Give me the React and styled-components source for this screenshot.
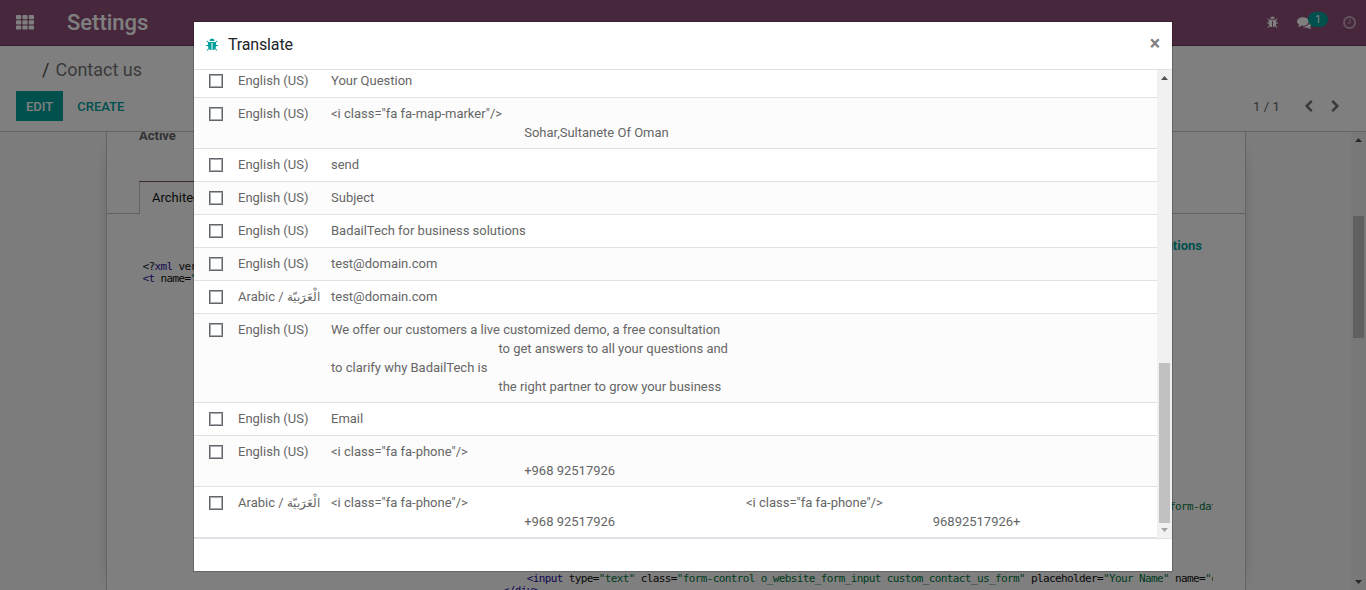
import React from "react";
import styled, { createGlobalStyle } from "styled-components";

const teal = "#00A09D";

const GlobalStyle = createGlobalStyle`
  *, *::before, *::after { box-sizing: border-box; }
  html, body { margin: 0; height: 100%; overflow: hidden; }
  body { font-family: Roboto, "Liberation Sans", sans-serif; font-size: 13px; line-height: 19px; color: #666; }
`;

const Client = styled.div`
  display: flex;
  flex-direction: column;
  height: 590px;
  width: 1366px;
  overflow: hidden;
`;

/* ---------- icons ---------- */
const Svg = styled.svg`
  display: block;
  width: ${(p) => p.$size}px;
  height: ${(p) => p.$size}px;
  fill: currentColor;
  flex: none;
`;
const icons = {
  bug: "M1696 960q0 26-19 45t-45 19h-224q0 171-67 290l208 209q19 19 19 45t-19 45q-18 19-45 19t-45-19l-198-197q-5 5-15 13t-42 28.5-65 36.5-82 29-97 13v-896h-128v896q-51 0-101.5-13.5t-87-33-66-39-43.5-32.5l-15-14-183 207q-20 21-48 21-24 0-43-16-19-18-20.5-44.5t15.5-46.5l202-227q-58-114-58-274h-224q-26 0-45-19t-19-45 19-45 45-19h224v-294l-173-173q-19-19-19-45t19-45 45-19 45 19l173 173h844l173-173q19-19 45-19t45 19 19 45-19 45l-173 173v294h224q26 0 45 19t19 45zm-480-576h-640q0-133 93.5-226.5t226.5-93.5 226.5 93.5 93.5 226.5z",
  comments:
    "M1408 768q0 139-94 257t-256.5 186.5-353.5 68.5q-86 0-176-16-124 88-278 128-36 9-86 16h-3q-11 0-20.5-8t-11.5-21q-1-3-1-6.5t.5-6.5 2-6l2.5-5 3.5-5.5 4-5 4.5-5 4-4.5q5-6 23-25t26-29.5 22.5-29 25-38.5 20.5-44q-124-72-195-177t-71-224q0-139 94-257t256.5-186.5 353.5-68.5 353.5 68.5 256.5 186.5 94 257zm384 256q0 120-71 224.5t-195 176.5q10 24 20.5 44t25 38.5 22.5 29 26 29.5 23 25q1 1 4 4.5t4.5 5 4 5 3.5 5.5l2.5 5 2 6 .5 6.5-1 6.5q-3 14-13 22t-22 7q-50-7-86-16-154-40-278-128-90 16-176 16-271 0-472-132 58 4 88 4 161 0 309-45t264-129q125-92 192-212t67-254q0-77-23-152 129 71 204 178t75 230z",
  clock:
    "M1024 544v448q0 14-9 23t-23 9h-320q-14 0-23-9t-9-23v-64q0-14 9-23t23-9h224v-352q0-14 9-23t23-9h64q14 0 23 9t9 23zm416 352q0-148-73-273t-198-198-273-73-273 73-198 198-73 273 73 273 198 198 273 73 273-73 198-198 73-273zm224 0q0 209-103 385.5t-279.5 279.5-385.5 103-385.5-103-279.5-279.5-103-385.5 103-385.5 279.5-279.5 385.5-103 385.5 103 279.5 279.5 103 385.5z",
  left: "M1427 301l-531 531 531 531q19 19 19 45t-19 45l-166 166q-19 19-45 19t-45-19l-742-742q-19-19-19-45t19-45l742-742q19-19 45-19t45 19l166 166q19 19 19 45t-19 45z",
  right:
    "M1363 877l-742 742q-19 19-45 19t-45-19l-166-166q-19-19-19-45t19-45l531-531-531-531q-19-19-19-45t19-45l166-166q19-19 45-19t45 19l742 742q19 19 19 45t-19 45z",
};
const Icon = ({ name, size = 14 }) => (
  <Svg $size={size} viewBox="0 0 1792 1792">
    <path d={icons[name]} />
  </Svg>
);

/* ---------- navbar ---------- */
const Navbar = styled.header`
  display: flex;
  align-items: center;
  height: 46px;
  flex: none;
  padding: 0 9px 1px 16px;
  background: #8f4f78;
  border-bottom: 1px solid #68395a;
  color: #fff;
`;
const AppsGrid = styled.svg`
  width: 18px;
  height: 15px;
  fill: #fff;
`;
const AppName = styled.div`
  margin-left: 33px;
  padding-top: 1px;
  font-size: 22px;
  line-height: 26px;
  font-weight: 500;
`;
const Systray = styled.div`
  display: flex;
  align-items: center;
  margin-left: auto;
`;
const Messages = styled.div`
  display: flex;
  align-items: center;
  margin: 0 14px 0 18px;
`;
const Badge = styled.span`
  width: 20px;
  height: 15px;
  margin: -6px 0 0 -4px;
  border-radius: 8px;
  background: ${teal};
  font-size: 11px;
  line-height: 15px;
  text-align: center;
`;
const Faded = styled.span`
  opacity: 0.5;
`;

/* ---------- control panel ---------- */
const ControlPanel = styled.section`
  height: 86px;
  flex: none;
  padding: 12px 24px 0 16px;
  background: #fff;
  border-bottom: 1px solid #cbcbcb;
`;
const Breadcrumb = styled.div`
  padding-left: 26px;
  font-size: 18px;
  line-height: 24px;
  color: #777;
`;
const Slash = styled.span`
  color: #4c4c4c;
  margin-right: 6px;
`;
const Actions = styled.div`
  display: flex;
  align-items: center;
  margin-top: 9px;
`;
const Button = styled.button`
  height: 30px;
  padding: 1px ${(p) => (p.$primary ? 10 : 14)}px 0;
  border: 0;
  font: 500 13px/29px Roboto, sans-serif;
  color: ${(p) => (p.$primary ? "#fff" : teal)};
  background: ${(p) => (p.$primary ? teal : "transparent")};
`;
const Pager = styled.div`
  display: flex;
  align-items: center;
  margin-left: auto;
  color: #666;
  letter-spacing: 0.1px;
`;
const PagerButtons = styled.div`
  display: flex;
  gap: 14px;
  margin-left: 22px;
  color: #777;
`;

/* ---------- form ---------- */
const Content = styled.main`
  display: flex;
  flex: 1;
  min-height: 0;
  background: #f9f9f9;
`;
const SheetWrap = styled.div`
  display: flex;
  width: 1351px;
  overflow: hidden;
`;
const Sheet = styled.div`
  width: 1140px;
  margin-left: 106px;
  margin-right: 105px;
  background: #fff;
  border: solid #c8c8d3;
  border-width: 0 1px;
  box-shadow: 0 5px 20px -15px #000;
  overflow: hidden;
`;
const FieldLabel = styled.div`
  margin: -6px 0 0 32px;
  font-weight: 700;
  color: #666;
`;
const Tabs = styled.div`
  display: flex;
  margin-top: 36px;
`;
const TabLine = styled.div`
  width: ${(p) => p.$width || "auto"};
  flex: ${(p) => (p.$width ? "none" : 1)};
  border-bottom: 1px solid #c4c4c4;
`;
const Tab = styled.div`
  height: 33px;
  padding: 6px 12px;
  border: solid #c4c4c4;
  border-width: 1px 1px 0;
  border-top-color: #7c4a6c;
  color: #111;
`;
const TranslateLink = styled.div`
  margin: 22px 43px 0 0;
  text-align: right;
  font-weight: 700;
  color: ${teal};
`;
const Code = styled.pre`
  margin: 6px 32px 0 35.5px;
  overflow: hidden;
  font: 11px/12px "DejaVu Sans Mono", monospace;
  letter-spacing: -0.62px;
  color: #111;
`;
const Tag = styled.span`
  color: #2a0f9c;
`;
const Str = styled.span`
  color: #00783c;
`;

/* ---------- scroll bars ---------- */
const ScrollTrack = styled.div`
  display: flex;
  flex-direction: column;
  align-items: center;
  width: 15px;
  flex: none;
  background: #f1f1f1;
`;
const Arrow = styled.div`
  width: 7px;
  height: 4px;
  margin: ${(p) => (p.$down ? "auto 0 6px" : "6px 0 0")};
  background: ${(p) => p.$color || "#505050"};
  clip-path: ${(p) => (p.$down ? "polygon(0 0, 100% 0, 50% 100%)" : "polygon(50% 0, 100% 100%, 0 100%)")};
`;
const Thumb = styled.div`
  width: 11px;
  height: ${(p) => p.$height}px;
  margin-top: ${(p) => p.$offset}px;
  background: #c1c1c1;
`;

/* ---------- dialog ---------- */
const Backdrop = styled.div`
  position: fixed;
  inset: 0;
  z-index: 10;
  display: flex;
  justify-content: center;
  align-items: flex-start;
  padding-top: 21px;
  background: rgba(0, 0, 0, 0.5);
`;
const Dialog = styled.div`
  display: flex;
  flex-direction: column;
  width: 980px;
  height: 551px;
  background: #fff;
  background-clip: padding-box;
  border: 1px solid rgba(0, 0, 0, 0.2);
`;
const DialogHeader = styled.div`
  display: flex;
  align-items: center;
  height: 48px;
  flex: none;
  padding: 0 12px 1px 11px;
  border-bottom: 1px solid #dee2e6;
  color: ${teal};
`;
const DialogTitle = styled.h4`
  margin: 0 auto 0 9px;
  font-size: 16px;
  line-height: 24px;
  font-weight: 400;
  letter-spacing: -0.15px;
  color: #212529;
`;
const Close = styled.span`
  padding-bottom: 3px;
  font-size: 19.5px;
  line-height: 20px;
  font-weight: 700;
  color: #7f7f7f;
`;
const DialogBody = styled.div`
  display: flex;
  height: 468px;
  flex: none;
`;
const Rows = styled.div`
  display: flex;
  flex-direction: column;
  justify-content: flex-end;
  flex: 1;
  overflow: hidden;
`;
const Row = styled.div`
  display: grid;
  grid-template-columns: 29px 93px 415px 1fr;
  flex: none;
  min-height: 33px;
  padding: 6px 0 6px 15px;
  border-bottom: 1px solid #dee2e6;
  background: ${(p) => (p.$striped ? "#fcfcfc" : "#fff")};
  white-space: pre;
`;
const Checkbox = styled.span`
  width: 14px;
  height: 14px;
  margin-top: 3px;
  border: 1px solid #666;
  background: #fff;
  box-shadow: inset 0 0 0 1px #a3abb5;
`;
const Arabic = styled.span`
  font-size: 12.3px;
  line-height: 1;
`;
const Term = styled.span`
  letter-spacing: -0.005px;
`;
const DialogFooter = styled.div`
  flex: 1;
  border-top: 1px solid #dee2e6;
`;

const EN = "English (US)";
const AR = (
  <>
    Arabic / <Arabic>الْعَرَبيّة</Arabic>
  </>
);
const pad = (n) => " ".repeat(n);
const terms = [
  [EN, "Your Question"],
  [EN, `<i class="fa fa-map-marker"/>\n${pad(60)}Sohar,Sultanete Of Oman`],
  [EN, "send"],
  [EN, "Subject"],
  [EN, "BadailTech for business solutions"],
  [EN, "test@domain.com"],
  [AR, "test@domain.com"],
  [
    EN,
    `We offer our customers a live customized demo, a free consultation\n${pad(52)}to get answers to all your questions and\nto clarify why BadailTech is\n${pad(52)}the right partner to grow your business`,
  ],
  [EN, "Email"],
  [EN, `<i class="fa fa-phone"/>\n${pad(60)}+968 92517926`],
  [AR, `<i class="fa fa-phone"/>\n${pad(60)}+968 92517926`, `<i class="fa fa-phone"/>\n${pad(58)}96892517926+`],
];

export default function App() {
  return (
    <>
      <GlobalStyle />
      <Client>
        <Navbar>
          <AppsGrid viewBox="0 0 18 15">
            {[0, 1, 2].map((r) =>
              [0, 1, 2].map((c) => <rect key={`${r}${c}`} x={c * 6.4} y={r * 5.2} width="5.2" height="4.2" rx="0.9" />)
            )}
          </AppsGrid>
          <AppName>Settings</AppName>
          <Systray>
            <Icon name="bug" size={13} />
            <Messages>
              <Icon name="comments" size={15} />
              <Badge>1</Badge>
            </Messages>
            <Faded>
              <Icon name="clock" size={15} />
            </Faded>
          </Systray>
        </Navbar>
        <ControlPanel>
          <Breadcrumb>
            <Slash>/</Slash>Contact us
          </Breadcrumb>
          <Actions>
            <Button $primary>EDIT</Button>
            <Button>CREATE</Button>
            <Pager>
              1 / 1
              <PagerButtons>
                <Icon name="left" size={13} />
                <Icon name="right" size={13} />
              </PagerButtons>
            </Pager>
          </Actions>
        </ControlPanel>
        <Content>
          <SheetWrap>
            <Sheet>
              <FieldLabel>Active</FieldLabel>
              <Tabs>
                <TabLine $width="32px" />
                <Tab>Architecture</Tab>
                <TabLine />
              </Tabs>
              <TranslateLink>Edit Translations</TranslateLink>
              <Code>
                {"<?"}
                <Tag>xml</Tag>
                {" version="}
                <Str>"1.0"</Str>
                {"?>\n"}
                <Tag>{"<t"}</Tag>
                {" name="}
                <Str>"Contact us"</Str>
                {">" + "\n".repeat(19) + pad(171)}
                <Str>form-data"</Str>
                {"\n".repeat(6) + pad(64)}
                <Tag>{"<input"}</Tag>
                {" type="}
                <Str>"text"</Str>
                {" class="}
                <Str>"form-control o_website_form_input custom_contact_us_form"</Str>
                {" placeholder="}
                <Str>"Your Name"</Str>
                {" name="}
                <Str>"contact_name"</Str>
                {"\n" + pad(60)}
                <Tag>{"</div>"}</Tag>
              </Code>
            </Sheet>
          </SheetWrap>
          <ScrollTrack>
            <Arrow />
            <Thumb $height={122} $offset={74} />
            <Arrow $down />
          </ScrollTrack>
        </Content>
      </Client>
      <Backdrop>
        <Dialog>
          <DialogHeader>
            <Icon name="bug" size={14} />
            <DialogTitle>Translate</DialogTitle>
            <Close>×</Close>
          </DialogHeader>
          <DialogBody>
            <Rows>
              {terms.map(([lang, source, value], i) => (
                <Row key={i} $striped={i % 2 === 1}>
                  <Checkbox />
                  <span>{lang}</span>
                  <Term>{source}</Term>
                  <Term>{value}</Term>
                </Row>
              ))}
            </Rows>
            <ScrollTrack>
              <Arrow />
              <Thumb $height={160} $offset={283} />
              <Arrow $down $color="#a3a3a3" />
            </ScrollTrack>
          </DialogBody>
          <DialogFooter />
        </Dialog>
      </Backdrop>
    </>
  );
}
